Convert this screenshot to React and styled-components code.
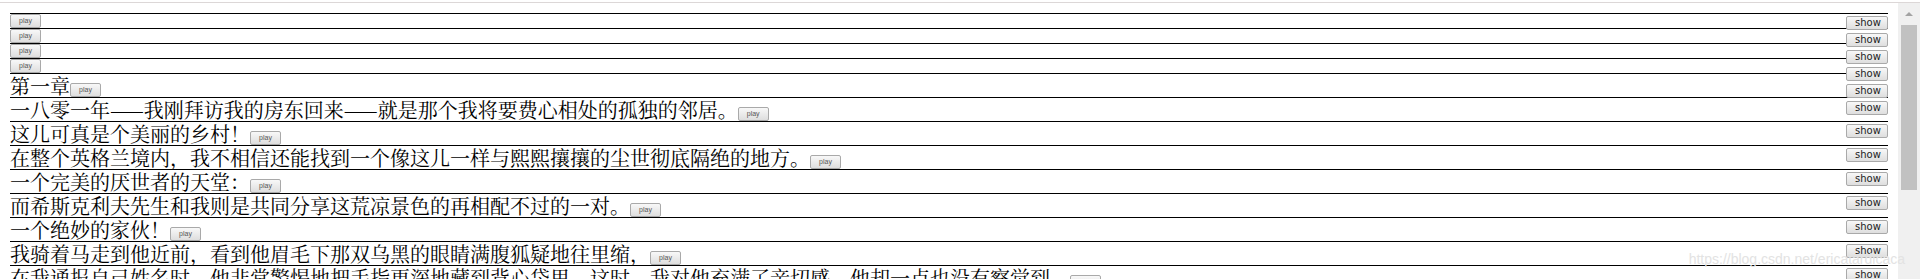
import React from "react";
import styled, { createGlobalStyle } from "styled-components";

const Global = createGlobalStyle`
  html, body { margin: 0; padding: 0; background: #fff; overflow: hidden; }
  #root { width: 1920px; height: 279px; }
`;

const Page = styled.div`
  position: relative;
  width: 1920px;
  height: 279px;
  display: flex;
  flex-direction: column;
  overflow: hidden;
  background: #fff;
`;

const TopEdge = styled.div`
  flex: none;
  height: 2px;
  border-bottom: 1px solid #dcd7d7;
`;

const Main = styled.div`
  flex: 1;
  min-height: 0;
  display: flex;
`;

const Content = styled.div`
  flex: 1;
  min-width: 0;
  padding: 10px 10px 0;
  overflow: hidden;
`;

const Row = styled.div`
  border-top: 1px solid #000;
`;

const Line = styled.div`
  display: flex;
  align-items: flex-end;
  min-height: 14px;
`;

const Text = styled.span`
  font-family: "Noto Serif CJK SC", "Noto Sans CJK SC", serif;
  font-size: 20px;
  line-height: 23px;
  color: #000;
  white-space: nowrap;
`;

const buttonBase = `
  box-sizing: border-box;
  border: 1px solid #a9a9a9;
  border-radius: 2px;
  background: linear-gradient(#f8f8f8, #dedede);
  padding: 0;
  margin: 0;
  cursor: default;
`;

const PlayButton = styled.button`
  ${buttonBase}
  flex: none;
  width: 31px;
  height: 14px;
  font-family: "Liberation Sans", Arial, sans-serif;
  font-size: 7px;
  line-height: 12px;
  color: #555;
`;

const ShowButton = styled.button`
  ${buttonBase}
  float: right;
  clear: right;
  width: 42px;
  height: 14px;
  margin: 2px 0 1px;
  padding-left: 2px;
  font-family: "DejaVu Sans", Verdana, sans-serif;
  font-size: 10px;
  line-height: 12px;
  color: #222;
`;

const Scrollbar = styled.div`
  flex: none;
  width: 22px;
  background: #f0f0f0;
  display: flex;
  flex-direction: column;
  align-items: center;
`;

const ArrowUp = styled.div`
  flex: none;
  margin-top: 9px;
  width: 0;
  height: 0;
  border-left: 4px solid transparent;
  border-right: 4px solid transparent;
  border-bottom: 4px solid #a3a3a3;
`;

const Thumb = styled.div`
  flex: none;
  margin-top: 9px;
  width: 16px;
  height: 165px;
  background: #c1c1c1;
`;

const Watermark = styled.div`
  position: absolute;
  right: 15px;
  top: 251px;
  font-family: "Liberation Sans", Arial, sans-serif;
  font-size: 14px;
  color: #e3e3e3;
  white-space: nowrap;
  pointer-events: none;
`;

const lines = [
  "",
  "",
  "",
  "",
  "第一章",
  "一八零一年——我刚拜访我的房东回来——就是那个我将要费心相处的孤独的邻居。",
  "这儿可真是个美丽的乡村！",
  "在整个英格兰境内，我不相信还能找到一个像这儿一样与熙熙攘攘的尘世彻底隔绝的地方。",
  "一个完美的厌世者的天堂：",
  "而希斯克利夫先生和我则是共同分享这荒凉景色的再相配不过的一对。",
  "一个绝妙的家伙！",
  "我骑着马走到他近前，看到他眉毛下那双乌黑的眼睛满腹狐疑地往里缩，",
  "在我通报自己姓名时，他非常警惕地把手指更深地藏到背心袋里，这时，我对他充满了亲切感，他却一点也没有察觉到。",
];

export default function App() {
  return (
    <>
      <Global />
      <Page>
        <TopEdge />
        <Main>
          <Content>
            {lines.map((t, i) => (
              <Row key={i}>
                <ShowButton>show</ShowButton>
                <Line>
                  {t && <Text>{t}</Text>}
                  <PlayButton>play</PlayButton>
                </Line>
              </Row>
            ))}
          </Content>
          <Scrollbar>
            <ArrowUp />
            <Thumb />
          </Scrollbar>
        </Main>
        <Watermark>https://blog.csdn.net/ericatardicaca</Watermark>
      </Page>
    </>
  );
}
